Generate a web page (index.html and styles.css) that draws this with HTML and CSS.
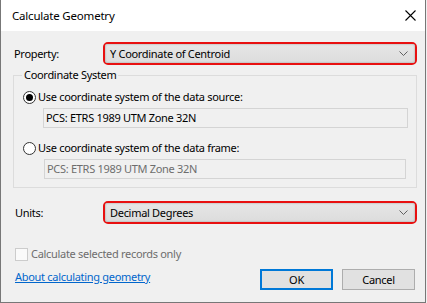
FILE: index.html
```html
<!DOCTYPE html>
<html lang="en">
<head>
    <meta charset="UTF-8">
    <meta name="viewport" content="width=device-width, initial-scale=1.0">
    <title>Calculate Geometry</title>
    <link rel="stylesheet" href="styles.css">
</head>
<body>
    <div class="dialog">
        <div class="titlebar">
            <span class="title">Calculate Geometry</span>
            <svg class="close" width="11" height="11" viewBox="0 0 11 11">
                <path d="M0.5 0.5 L10.5 10.5 M10.5 0.5 L0.5 10.5" stroke="#000" stroke-width="1.1" fill="none"/>
            </svg>
        </div>

        <div class="content">
            <div class="field-row property-row">
                <label class="field-label">Property:</label>
                <div class="combo-mark">
                    <div class="combo">
                        <span>Y Coordinate of Centroid</span>
                        <svg class="chevron" width="9" height="5" viewBox="0 0 9 5">
                            <path d="M0.5 0.5 L4.5 4.5 L8.5 0.5" stroke="#606060" stroke-width="1" fill="none"/>
                        </svg>
                    </div>
                </div>
            </div>

            <fieldset class="group">
                <legend>Coordinate System</legend>
                <div class="radio-row">
                    <span class="radio checked"></span>
                    <span>Use coordinate system of the data source:</span>
                </div>
                <div class="textbox">PCS: ETRS 1989 UTM Zone 32N</div>
                <div class="radio-row second">
                    <span class="radio"></span>
                    <span>Use coordinate system of the data frame:</span>
                </div>
                <div class="textbox disabled">PCS: ETRS 1989 UTM Zone 32N</div>
            </fieldset>

            <div class="field-row units-row">
                <label class="field-label">Units:</label>
                <div class="combo-mark">
                    <div class="combo">
                        <span>Decimal Degrees</span>
                        <svg class="chevron" width="9" height="5" viewBox="0 0 9 5">
                            <path d="M0.5 0.5 L4.5 4.5 L8.5 0.5" stroke="#606060" stroke-width="1" fill="none"/>
                        </svg>
                    </div>
                </div>
            </div>

            <div class="check-row">
                <span class="checkbox"></span>
                <span>Calculate selected records only</span>
            </div>

            <div class="footer">
                <a href="#" class="help-link">About calculating geometry</a>
                <div class="buttons">
                    <button class="btn default">OK</button>
                    <button class="btn">Cancel</button>
                </div>
            </div>
        </div>
    </div>
</body>
</html>
```

FILE: styles.css
```css
/* Reset */
* {
    margin: 0;
    padding: 0;
    box-sizing: border-box;
}

body {
    background-color: #f0f0f0;
    font-family: 'Noto Sans', 'Liberation Sans', sans-serif;
    font-size: 11px;
    letter-spacing: -0.3px;
    line-height: 16px;
    color: #000;
}

/* Window frame */
.dialog {
    width: 426px;
    height: 303px;
    background-color: #f0f0f0;
    border: 1px solid #777;
    border-top: none;
}

.titlebar {
    height: 31px;
    background-color: #fff;
    display: flex;
    align-items: center;
    justify-content: space-between;
    padding: 0 9px 0 11px;
}

.title {
    font-size: 11.5px;
    letter-spacing: -0.2px;
}

.close {
    display: block;
    margin-top: -1px;
}

.content {
    padding: 11px 0 0 0;
}

/* Label + combobox rows */
.field-row {
    display: flex;
    align-items: center;
    padding-left: 13px;
}

.field-label {
    width: 89px;
}

.units-row {
    margin-top: 13px;
    padding-left: 14px;
}

.units-row .field-label {
    width: 88px;
}

.combo-mark {
    width: 314px;
    height: 23px;
    border: 2px solid #e81010;
    border-radius: 5px;
}

.combo {
    height: 100%;
    background: linear-gradient(#e6e6e6, #dcdcdc);
    box-shadow: inset 0 0 2px rgba(0, 0, 0, 0.35);
    border-radius: 2px;
    display: flex;
    align-items: center;
    justify-content: space-between;
    padding: 0 7px 0 5px;
}

.chevron {
    display: block;
}

/* Group box */
.group {
    margin: 2px 0 0 12px;
    width: 404px;
    border: 1px solid #dcdcdc;
    padding: 6px 8px 8px 8px;
}

.group legend {
    padding: 0 2px;
    line-height: 16px;
}

.radio-row {
    display: flex;
    align-items: center;
    height: 16px;
    padding-left: 1px;
}

.radio-row.second {
    margin-top: 12px;
}

.radio {
    width: 13px;
    height: 13px;
    border: 1px solid #333;
    border-radius: 50%;
    background-color: #fff;
    margin-right: 2px;
    display: flex;
    align-items: center;
    justify-content: center;
}

.radio.checked::after {
    content: "";
    width: 7px;
    height: 7px;
    border-radius: 50%;
    background-color: #000;
}

.textbox {
    margin: 3px 0 0 21px;
    width: 365px;
    height: 20px;
    border: 1px solid #d4d4d4;
    background-color: #f0f0f0;
    padding: 0 0 0 2px;
    line-height: 18px;
}

.textbox.disabled {
    margin-left: 22px;
    width: 362px;
    color: #6d6d6d;
}

/* Checkbox */
.check-row {
    display: flex;
    align-items: center;
    height: 16px;
    margin-top: 22px;
    padding-left: 14px;
    color: #6d6d6d;
}

.checkbox {
    width: 13px;
    height: 13px;
    border: 1px solid #cccccc;
    background-color: #fafafa;
    margin-right: 3px;
}

/* Footer */
.footer {
    display: flex;
    justify-content: space-between;
    align-items: center;
    margin-top: 7px;
    padding: 0 10px 0 14px;
}

.help-link {
    color: #0066cc;
    text-decoration: underline;
    margin-top: -5px;
}

.buttons {
    display: flex;
    gap: 9px;
}

.btn {
    width: 73px;
    height: 21px;
    font-family: inherit;
    font-size: 11px;
    letter-spacing: -0.3px;
    background-color: #e1e1e1;
    border: 1px solid #adadad;
    color: #000;
}

.btn.default {
    border: 2px solid #0078d7;
}
```
